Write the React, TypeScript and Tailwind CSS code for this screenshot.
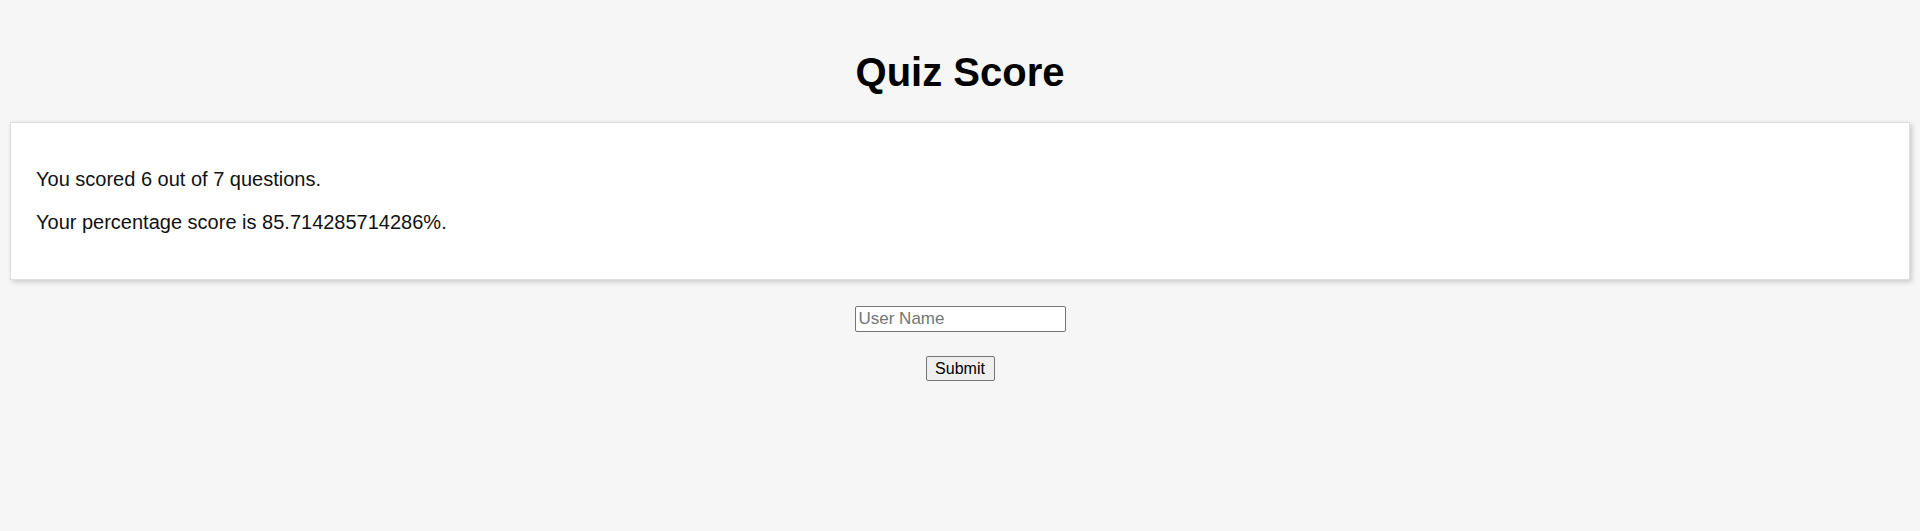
import React from "react";

const score = 6;
const total = 7;

export default function App() {
  const percent = Math.round((score / total) * 100 * 1e12) / 1e12;

  return (
    <div className="min-h-screen bg-[#f6f6f6] pt-[49px] font-['Liberation_Sans',Arial,sans-serif] text-[#111]">
      <h1 className="text-center text-[40px] leading-[46px] font-bold text-black mb-[27px]">
        Quiz Score
      </h1>

      <div className="mx-[10px] border border-[#dddddd] bg-white px-[25px] py-[45px] shadow-[2px_2px_5px_rgba(0,0,0,0.18)]">
        <div className="flex flex-col gap-5 text-[20px] leading-[23px]">
          <p>
            You scored {score} out of {total} questions.
          </p>
          <p>Your percentage score is {percent}%.</p>
        </div>
      </div>

      <form
        className="flex flex-col items-center mt-[26px]"
        onSubmit={(e) => e.preventDefault()}
      >
        <input
          type="text"
          placeholder="User Name"
          className="w-[211px] h-[26px] px-[3px] text-[17px] bg-white border border-[#767676] rounded-[2px] placeholder:text-[#757575] outline-none"
        />
        <button
          type="submit"
          className="mt-[24px] w-[69px] h-[25px] text-[16px] text-black bg-[#efefef] border border-[#767676] rounded-[2px]"
        >
          Submit
        </button>
      </form>
    </div>
  );
}
